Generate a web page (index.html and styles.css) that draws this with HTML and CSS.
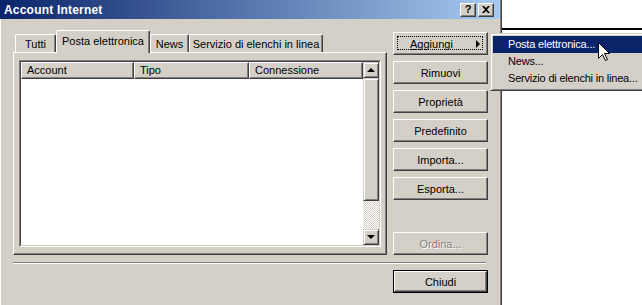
FILE: index.html
```html
<!DOCTYPE html>
<html lang="it">
<head>
    <meta charset="UTF-8">
    <title>Account Internet</title>
    <link rel="stylesheet" href="styles.css">
</head>
<body>
    <div class="dialog">
        <div class="titlebar">
            <span class="title">Account Internet</span>
            <div class="capbtns">
                <span class="capbtn help">?</span>
                <span class="capbtn">
                    <svg width="8" height="7" viewBox="0 0 8 7"><path d="M0 0h2l2 2 2-2h2L5 3.5 8 7H6L4 5 2 7H0l3-3.5z" fill="#000"/></svg>
                </span>
            </div>
        </div>

        <div class="content">
            <div class="tabctl">
                <div class="tabstrip">
                    <div class="tab tab-tutti">Tutti</div>
                    <div class="tab tab-posta active">Posta elettronica</div>
                    <div class="tab tab-news">News</div>
                    <div class="tab tab-serv">Servizio di elenchi in linea</div>
                </div>
                <div class="panel">
                    <div class="listview">
                        <div class="listview-inner">
                            <div class="listbody">
                                <div class="header">
                                    <div class="col col-account">Account</div>
                                    <div class="col col-tipo">Tipo</div>
                                    <div class="col col-conn">Connessione</div>
                                </div>
                            </div>
                            <div class="vscroll">
                                <div class="sbtn"><span class="arrow up"></span></div>
                                <div class="thumb"></div>
                                <div class="track"></div>
                                <div class="sbtn"><span class="arrow down"></span></div>
                            </div>
                        </div>
                    </div>
                </div>
            </div>

            <div class="buttons">
                <button class="btn btn-add"><span><u>A</u>ggiungi</span><span class="subarrow"></span></button>
                <button class="btn">Rimuovi</button>
                <button class="btn">Proprietà</button>
                <button class="btn">Predefinito</button>
                <button class="btn">Importa...</button>
                <button class="btn">Esporta...</button>
                <button class="btn disabled">Ordina...</button>
            </div>
        </div>

        <div class="separator"></div>

        <div class="footer">
            <div class="default-ring"><button class="btn">Chiudi</button></div>
        </div>
    </div>

    <div class="backdrop">
        <div class="backdrop-line"></div>
    </div>

    <div class="menu">
        <div class="menu-item selected">Posta elettronica...</div>
        <div class="menu-item">News...</div>
        <div class="menu-item">Servizio di elenchi in linea...</div>
    </div>

    <svg class="cursor" width="13" height="20" viewBox="0 0 13 20">
        <path d="M0.5 0.5V16.5L4.5 12.5L7.5 18.5L9.5 17.5L6.5 11.5H11.5Z" fill="#fff" stroke="#000" stroke-width="1"/>
    </svg>
</body>
</html>
```

FILE: styles.css
```css
* {
    box-sizing: border-box;
}
body {
    margin: 0;
    height: 305px;
    overflow: hidden;
    background: #fff;
    font-family: "Liberation Sans", Arial, sans-serif;
    font-size: 11px;
    color: #000;
    display: flex;
}
.dialog {
    width: 502px;
    height: 305px;
    flex: none;
    background: #d4d0c8;
    border-right: 1px solid #404040;
    box-shadow: inset -1px 0 #808080, inset 1px 0 #fff;
    display: flex;
    flex-direction: column;
}
.titlebar {
    height: 19px;
    margin-right: 1px;
    background: linear-gradient(to right, #0a246a, #a6caf0);
    display: flex;
    align-items: center;
    justify-content: space-between;
    padding: 0 6px 0 4px;
}
.title {
    color: #fff;
    font-weight: bold;
    font-size: 12px;
    letter-spacing: 0.2px;
}
.capbtns {
    display: flex;
    gap: 2px;
}
.capbtn {
    width: 16px;
    height: 14px;
    background: #d4d0c8;
    border: 1px solid;
    border-color: #fff #404040 #404040 #fff;
    box-shadow: inset -1px -1px #808080;
    display: flex;
    align-items: center;
    justify-content: center;
    font-weight: bold;
    font-size: 11px;
    line-height: 1;
}
.content {
    display: flex;
    gap: 6px;
    padding: 11px 13px 0 13px;
}
.tabctl {
    width: 375px;
}
.tabstrip {
    height: 22px;
    display: flex;
    align-items: flex-end;
    padding-left: 2px;
    position: relative;
    z-index: 1;
}
.tab {
    height: 18px;
    border: 1px solid;
    border-bottom: none;
    border-color: #fff #404040 #fff #fff;
    box-shadow: inset -1px 0 #808080;
    border-radius: 2px 2px 0 0;
    text-align: center;
    padding-top: 3px;
    background: #d4d0c8;
}
.tab-tutti { width: 41px; }
.tab-posta { width: 94px; }
.tab-news { width: 39px; }
.tab-serv { width: 134px; }
.tab.active {
    height: 23px;
    margin-bottom: -1px;
    padding-top: 4px;
}
.panel {
    height: 203px;
    border: 1px solid;
    border-color: #fff #404040 #404040 #fff;
    box-shadow: inset -1px -1px #808080;
    padding: 7px 5px 0 5px;
}
.listview {
    height: 187px;
    border: 1px solid;
    border-color: #808080 #fff #fff #808080;
}
.listview-inner {
    height: 100%;
    border: 1px solid;
    border-color: #404040 #d4d0c8 #d4d0c8 #404040;
    background: #fff;
    display: flex;
}
.listbody {
    flex: 1;
}
.header {
    display: flex;
    height: 17px;
}
.col {
    background: #d4d0c8;
    border: 1px solid;
    border-color: #fff #404040 #404040 #fff;
    box-shadow: inset -1px -1px #808080;
    padding: 1px 0 0 5px;
    line-height: 13px;
}
.col-account { width: 113px; }
.col-tipo { width: 115px; }
.col-conn { flex: 1; }
.vscroll {
    width: 16px;
    display: flex;
    flex-direction: column;
}
.sbtn, .thumb {
    background: #d4d0c8;
    border: 1px solid;
    border-color: #d4d0c8 #404040 #404040 #d4d0c8;
    box-shadow: inset 1px 1px #fff, inset -1px -1px #808080;
}
.sbtn {
    height: 16px;
    display: flex;
    align-items: center;
    justify-content: center;
}
.thumb {
    height: 123px;
}
.track {
    flex: 1;
    background-image: conic-gradient(#fff 25%, #d4d0c8 0 50%, #fff 0 75%, #d4d0c8 0);
    background-size: 2px 2px;
}
.arrow {
    width: 0;
    height: 0;
    border-left: 4px solid transparent;
    border-right: 4px solid transparent;
}
.arrow.up {
    border-bottom: 4px solid #000;
    margin-top: -1px;
}
.arrow.down {
    border-top: 4px solid #000;
}
.buttons {
    width: 95px;
    display: flex;
    flex-direction: column;
    gap: 6px;
    padding-top: 2px;
}
.btn {
    height: 23px;
    width: 95px;
    background: #d4d0c8;
    border: 1px solid;
    border-color: #fff #404040 #404040 #fff;
    box-shadow: inset -1px -1px #808080;
    font-family: inherit;
    font-size: 11px;
    color: #000;
    padding: 0;
}
.btn-add {
    position: relative;
    display: flex;
    align-items: center;
    padding-left: 16px;
}
.btn-add::after {
    content: "";
    position: absolute;
    top: 3px;
    left: 3px;
    right: 4px;
    bottom: 4px;
    border: 1px dotted #000;
}
.subarrow {
    position: absolute;
    right: 7px;
    top: 7px;
    width: 0;
    height: 0;
    border-top: 4px solid transparent;
    border-bottom: 4px solid transparent;
    border-left: 4px solid #000;
}
.btn.disabled {
    margin-top: auto;
    color: #808080;
    text-shadow: 1px 1px #fff;
}
.separator {
    margin: 7px 15px 0 13px;
    height: 2px;
    border-top: 1px solid #808080;
    border-bottom: 1px solid #fff;
}
.footer {
    display: flex;
    justify-content: flex-end;
    padding: 6px 13px 0 0;
}
.default-ring {
    border: 1px solid #000;
}
.default-ring .btn {
    height: 21px;
    width: 93px;
    display: block;
}
.backdrop {
    flex: 1;
    padding-top: 28px;
}
.backdrop-line {
    height: 2px;
    background: #000;
}
.menu {
    position: absolute;
    left: 490px;
    top: 33px;
    width: 160px;
    background: #d4d0c8;
    border: 1px solid;
    border-color: #d4d0c8 #404040 #404040 #d4d0c8;
    box-shadow: inset 1px 1px #fff, inset -1px -1px #808080;
    padding: 2px 2px 3px 2px;
}
.menu-item {
    height: 17px;
    line-height: 17px;
    padding-left: 15px;
    white-space: nowrap;
    letter-spacing: -0.2px;
}
.menu-item.selected {
    background: #0a246a;
    color: #fff;
}
.cursor {
    position: absolute;
    left: 598px;
    top: 42px;
}
```
